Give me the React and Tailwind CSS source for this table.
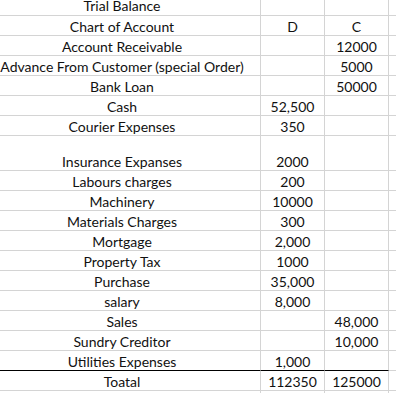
const rows = [
  { a: 'Trial Balance', first: true },
  { a: 'Chart of Account', d: 'D', c: 'C' },
  { a: 'Account Receivable', c: '12000' },
  { a: 'Advance From Customer (special Order)', c: '5000' },
  { a: 'Bank Loan', c: '50000' },
  { a: 'Cash', d: '52,500' },
  { a: 'Courier Expenses', d: '350' },
  { a: 'Insurance Expanses', d: '2000', tall: true },
  { a: 'Labours charges', d: '200' },
  { a: 'Machinery', d: '10000' },
  { a: 'Materials Charges', d: '300' },
  { a: 'Mortgage', d: '2,000' },
  { a: 'Property Tax', d: '1000' },
  { a: 'Purchase', d: '35,000' },
  { a: 'salary', d: '8,000' },
  { a: 'Sales', c: '48,000' },
  { a: 'Sundry Creditor', c: '10,000' },
  { a: 'Utilities Expenses', d: '1,000', total: true },
  { a: 'Toatal', d: '112350', c: '125000' },
  { a: '' },
];

function Cell({ children, dark, className = '' }) {
  return (
    <div
      className={
        'flex items-end justify-center whitespace-nowrap border-r border-b border-r-[#d4d4d4] leading-[16px] ' +
        (dark ? 'border-b-black ' : 'border-b-[#d4d4d4] ') +
        className
      }
    >
      {children}
    </div>
  );
}

export default function App() {
  return (
    <div
      className="h-[393px] w-[396px] overflow-hidden bg-white text-[14px] text-[#111]"
      style={{ fontFamily: 'Lato, "Liberation Sans", sans-serif' }}
    >
      {rows.map((r, i) => {
        const h = r.first ? 'h-[16px] pb-[1px]' : r.tall ? 'h-[35px]' : 'h-[20px]';
        return (
          <div key={i} className="grid grid-cols-[261px_64px_64px_1fr]">
            <Cell dark={r.total} className={h + ' pr-[16px]'}>
              <span>{r.a}</span>
            </Cell>
            <Cell dark={r.total} className={h}>{r.d}</Cell>
            <Cell dark={r.total} className={h}>{r.c}</Cell>
            <Cell className={h + ' border-r-0'} />
          </div>
        );
      })}
    </div>
  );
}
